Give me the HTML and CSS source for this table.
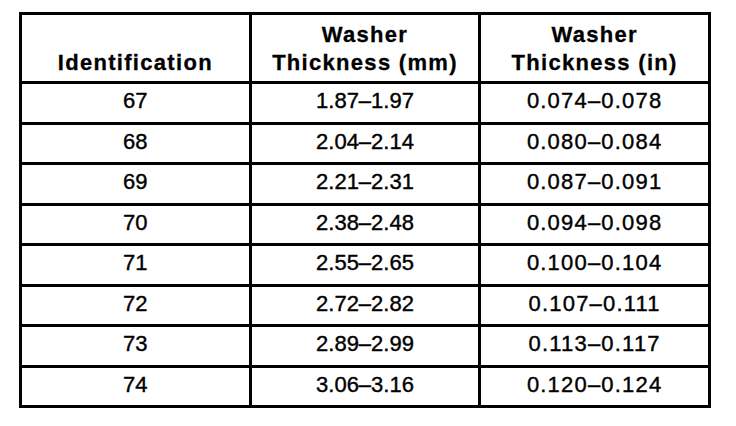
FILE: index.html
```html
<!DOCTYPE html>
<html>
<head>
  <title>Washer Thickness</title>
  <link rel="stylesheet" href="styles.css">
</head>
<body>
  <table class="washers">
    <thead>
      <tr>
        <th>Identification</th>
        <th>Washer<br>Thickness (mm)</th>
        <th>Washer<br>Thickness (in)</th>
      </tr>
    </thead>
    <tbody>
      <tr><td>67</td><td>1.87–1.97</td><td class="inch">0.074–0.078</td></tr>
      <tr><td>68</td><td>2.04–2.14</td><td class="inch">0.080–0.084</td></tr>
      <tr><td>69</td><td>2.21–2.31</td><td class="inch">0.087–0.091</td></tr>
      <tr><td>70</td><td>2.38–2.48</td><td class="inch">0.094–0.098</td></tr>
      <tr><td>71</td><td>2.55–2.65</td><td class="inch">0.100–0.104</td></tr>
      <tr><td>72</td><td>2.72–2.82</td><td class="inch">0.107–0.111</td></tr>
      <tr><td>73</td><td>2.89–2.99</td><td class="inch">0.113–0.117</td></tr>
      <tr><td>74</td><td>3.06–3.16</td><td class="inch">0.120–0.124</td></tr>
    </tbody>
  </table>
</body>
</html>
```

FILE: styles.css
```css
body {
  margin: 0;
  padding: 12px 0 0 19px;
  background: #fff;
  color: #000;
  font-family: "Liberation Sans", Arial, sans-serif;
}

.washers {
  width: 692px;
  border-collapse: collapse;
  table-layout: fixed;
  border: 3px solid #000;
}

.washers th,
.washers td {
  border: 3px solid #000;
  text-align: center;
  padding: 0;
}

.washers th {
  height: 62px;
  vertical-align: bottom;
  font-size: 22px;
  font-weight: bold;
  line-height: 28px;
  letter-spacing: 1.3px;
  padding-bottom: 4px;
  -webkit-text-stroke: 0.3px #000;
}

.washers td {
  height: 33.5px;
  padding-bottom: 4px;
  font-size: 22px;
  line-height: 33px;
  vertical-align: middle;
  -webkit-text-stroke: 0.4px #000;
}

.washers td.inch {
  letter-spacing: 1.2px;
}
```
